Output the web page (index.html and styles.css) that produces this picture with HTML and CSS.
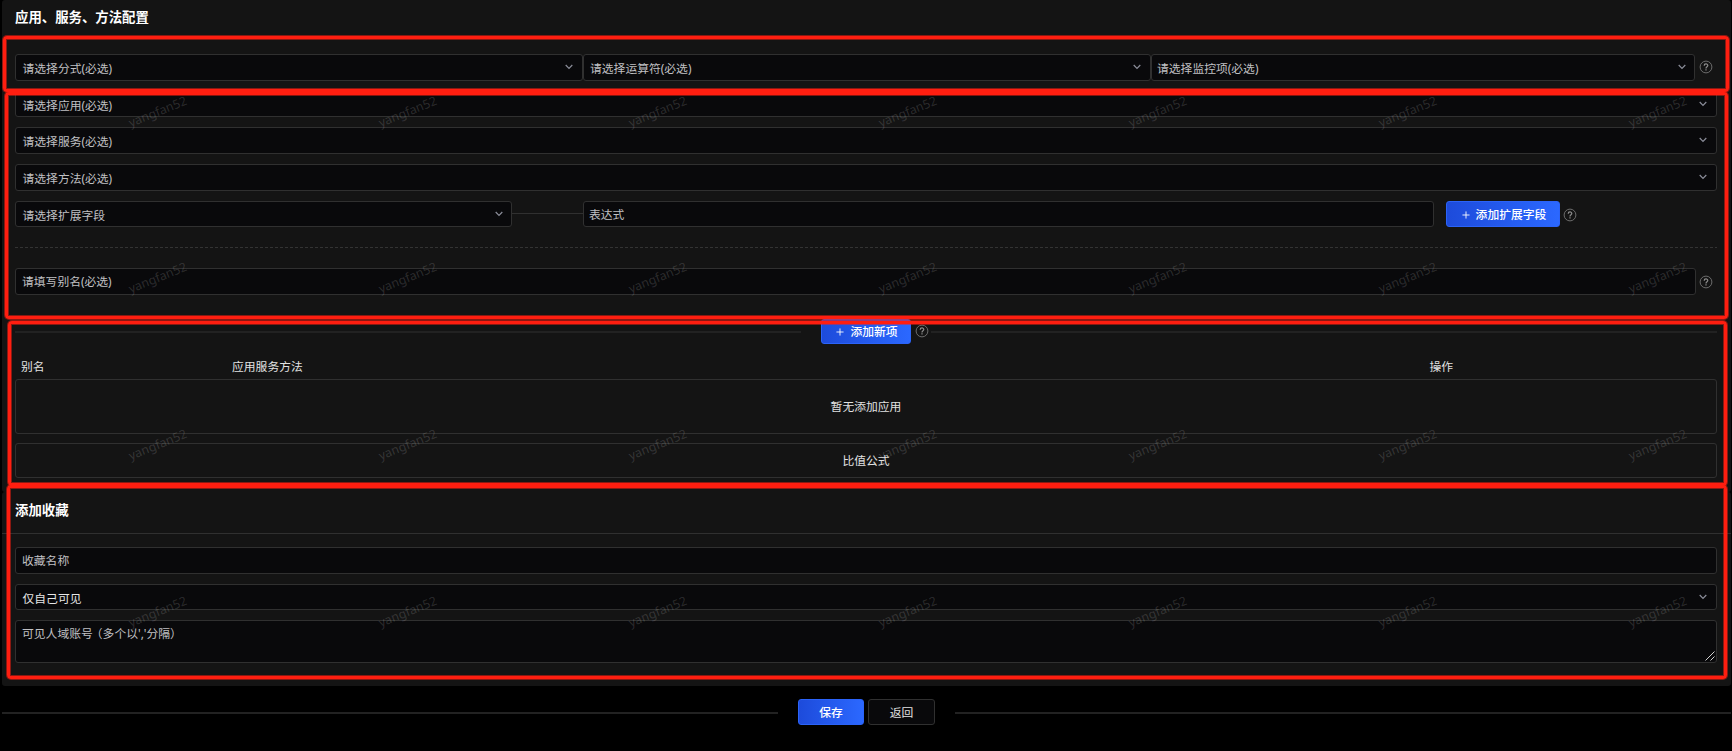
FILE: index.html
```html
<!DOCTYPE html>
<html lang="zh-CN">
<head>
<meta charset="utf-8">
<title>应用、服务、方法配置</title>
<link rel="stylesheet" href="styles.css">
</head>
<body>
<svg class="defs" width="0" height="0">
  <symbol id="chevron" viewBox="0 0 8 6"><path d="M.7 1 4 4.4 7.3 1" fill="none" stroke="currentColor" stroke-width="1.2"/></symbol>
  <symbol id="help" viewBox="0 0 14 14"><circle cx="7" cy="7" r="5.9" fill="none" stroke="#6c6c6c" stroke-width="1"/><path d="M5.2 5.7C5.2 3.4 8.8 3.4 8.8 5.6 8.8 6.8 7 6.8 7 8.4M7 9.3V10.5" fill="none" stroke="#909090" stroke-width="1.2"/></symbol>
  <symbol id="plus" viewBox="0 0 9 9"><path d="M4.5.5v8M.5 4.5h8" stroke="currentColor" stroke-width="1"/></symbol>
</svg>
<main class="page">
  <section class="panel config">
    <h2 class="title">应用、服务、方法配置</h2>
    <div class="formula">
      <div class="field select f1"><span>请选择分式(必选)</span><svg class="chev"><use href="#chevron"/></svg></div>
      <div class="field select f2"><span>请选择运算符(必选)</span><svg class="chev"><use href="#chevron"/></svg></div>
      <div class="field select f3"><span>请选择监控项(必选)</span><svg class="chev"><use href="#chevron"/></svg></div>
      <svg class="help"><use href="#help"/></svg>
    </div>
    <div class="stack">
      <div class="field select app"><span>请选择应用(必选)</span><svg class="chev"><use href="#chevron"/></svg></div>
      <div class="field select"><span>请选择服务(必选)</span><svg class="chev"><use href="#chevron"/></svg></div>
      <div class="field select"><span>请选择方法(必选)</span><svg class="chev"><use href="#chevron"/></svg></div>
    </div>
    <div class="extend">
      <div class="field select short ext"><span>请选择扩展字段</span><svg class="chev"><use href="#chevron"/></svg></div>
      <i class="joint"></i>
      <div class="field short expr"><span>表达式</span></div>
      <div class="btn primary add-ext"><svg class="plus"><use href="#plus"/></svg><span>添加扩展字段</span></div>
      <svg class="help"><use href="#help"/></svg>
    </div>
    <div class="dashed"></div>
    <div class="alias">
      <div class="field grow"><span>请填写别名(必选)</span></div>
      <svg class="help"><use href="#help"/></svg>
    </div>
    <div class="additem">
      <i class="rule left"></i>
      <div class="btn primary add-new"><svg class="plus"><use href="#plus"/></svg><span>添加新项</span></div>
      <svg class="help"><use href="#help"/></svg>
      <i class="rule right"></i>
    </div>
    <div class="thead"><span class="c1">别名</span><span class="c2">应用服务方法</span><span>操作</span></div>
    <div class="box empty">暂无添加应用</div>
    <div class="box ratio">比值公式</div>
  </section>
  <section class="panel favorite">
    <h2 class="title">添加收藏</h2>
    <div class="body">
      <div class="field"><span>收藏名称</span></div>
      <div class="field select short value"><span>仅自己可见</span><svg class="chev"><use href="#chevron"/></svg></div>
      <div class="field area"><span>可见人域账号<b class="fw">（</b>多个以','分隔<b class="fw end">）</b></span>
        <svg class="grip" viewBox="0 0 10 10"><path d="M.5 9.5l9-9M5.500 9.500l4-4" stroke="#d0d0d0" stroke-width="1"/></svg>
      </div>
    </div>
  </section>
  <footer class="footer">
    <i class="rule fl"></i>
    <div class="btn primary save">保存</div>
    <div class="btn back">返回</div>
    <i class="rule fr"></i>
  </footer>
</main>
<div class="watermarks">
  <span>yangfan52</span><span>yangfan52</span><span>yangfan52</span><span>yangfan52</span><span>yangfan52</span><span>yangfan52</span><span>yangfan52</span>
  <span>yangfan52</span><span>yangfan52</span><span>yangfan52</span><span>yangfan52</span><span>yangfan52</span><span>yangfan52</span><span>yangfan52</span>
  <span>yangfan52</span><span>yangfan52</span><span>yangfan52</span><span>yangfan52</span><span>yangfan52</span><span>yangfan52</span><span>yangfan52</span>
  <span>yangfan52</span><span>yangfan52</span><span>yangfan52</span><span>yangfan52</span><span>yangfan52</span><span>yangfan52</span><span>yangfan52</span>
</div>
<div class="mark m1"></div>
<div class="mark m2"></div>
<div class="mark m3"></div>
<div class="mark m4"></div>
</body>
</html>
```
FILE: styles.css
```css
* { box-sizing: border-box; }
body {
  margin: 0;
  width: 1732px;
  height: 751px;
  overflow: hidden;
  position: relative;
  background: #000;
  color: #e2e2e2;
  font: 11.8px/16px "Noto Sans", "Noto Sans CJK SC", sans-serif;
}
.defs { position: absolute; }
.page { padding: 0 1.5px 0 2px; }
.panel { background: #141414; border-radius: 3px; }
.config { height: 492px; padding: 0 13.5px 0 13px; }
.title { margin: 0; color: #fff; font-size: 13.4px; font-weight: 700; line-height: 20px; }
.config .title { padding-top: 7px; height: 54px; }

.field {
  display: flex;
  justify-content: space-between;
  height: 27px;
  padding: 4px 9px 0 6px;
  border: 1px solid #303030;
  border-radius: 3px;
  background: #09090b;
  color: #c0c0c3;
  white-space: nowrap;
}
.select { padding-top: 5px; padding-left: 6.5px; }
.app { padding-top: 6px; }
.short { height: 26px; }
.chev { width: 8px; height: 6px; margin-top: 4px; color: #8b8d99; flex: none; }
.help { width: 14px; height: 14px; flex: none; }
.value { color: #e6e6e6; }

.formula { display: flex; height: 36px; }
.f1 { width: 568px; }
.f2 { width: 567.5px; padding-left: 6px; }
.f3 { width: 544px; padding-left: 5.5px; padding-right: 8px; }
.formula .help { margin: 6px 0 0 4.5px; }
.stack { display: flex; flex-direction: column; gap: 10px; height: 111px; }
.extend { display: flex; height: 46px; }
.ext { width: 497px; padding-right: 8px; }
.joint { width: 71px; height: 1px; margin-top: 12px; background: #303030; }
.expr { width: 850.5px; padding-left: 5px; }
.add-ext { width: 114px; margin-left: 12.500px; }
.extend .help { margin: 6.5px 0 0 3px; }
.dashed { height: 1px; margin-bottom: 20px; background: repeating-linear-gradient(90deg, #333 0 3px, transparent 3px 5px); }
.alias { display: flex; height: 51px; }
.grow { width: 1681px; }
.alias .help { margin: 6.5px 0 0 3px; }

.btn {
  display: flex;
  align-items: center;
  justify-content: center;
  height: 26px;
  border: 1px solid #303030;
  border-radius: 3px;
  background: #09090b;
}
.primary {
  border-color: #2b63f8;
  background: linear-gradient(90deg, #1d4bdb, #2b68ff);
  color: #fff;
  font-weight: 500;
}
.plus { width: 8px; height: 8px; margin: 2px 6px 0 2px; }

.additem { display: flex; height: 42px; }
.rule { height: 1.5px; background: #222; }
.left { width: 786px; margin-top: 12px; }
.right { flex: 1; margin-top: 12px; margin-left: 1.500px; }
.add-new { width: 90px; margin-left: 20px; }
.additem .btn { height: 25px; padding-bottom: 1px; }
.additem .help { margin: 5px 0 0 4px; }
.thead { display: flex; height: 18px; padding-left: 6px; margin-top: -3px; align-items: flex-start; }
.c1 { width: 211px; }
.c2 { width: 1197.5px; }
.box { display: flex; align-items: center; justify-content: center; border: 1px solid #303030; border-radius: 3px; padding-bottom: 2px; }
.empty { height: 55px; margin-top: 3px; }
.ratio { height: 35px; margin-top: 9px; }

.favorite { height: 194px; }
.favorite .title { height: 42px; padding: 8px 13px 0; border-bottom: 1px solid #303030; }
.body { display: flex; flex-direction: column; gap: 10px; padding: 13px 13.5px 0 13px; }
.area { height: 43px; position: relative; }
.fw { font-weight: 400; margin-left: -2px; }
.fw.end { margin-left: 0; }
.grip { position: absolute; right: 1px; bottom: 1px; width: 10px; height: 10px; }

.footer { display: flex; padding-top: 13px; }
.footer .rule { margin-top: 13px; }
.fl { width: 776px; }
.fr { flex: 1; margin-left: 20px; }
.save { width: 66px; margin-left: 20px; }
.back { width: 67px; margin-left: 4px; }

.watermarks {
  position: absolute;
  left: 33px;
  top: 28.5px;
  display: grid;
  grid-template-columns: repeat(7, 250px);
  grid-auto-rows: 166.600px;
  place-items: center;
  color: rgba(255, 255, 255, .15);
  font-size: 12.4px;
}
.watermarks span { transform: rotate(-22deg); }

/* annotation frames drawn over the form */
.mark {
  position: absolute;
  border: 3px solid #ff1e10;
  border-radius: 4px;
  box-shadow: 0 0 0 1px rgba(255, 30, 16, .5), inset 0 0 0 1px rgba(255, 30, 16, .5);
}
.m1 { left: 3px; top: 36px; width: 1726px; height: 56px; }
.m2 { left: 5px; top: 92px; width: 1723px; height: 227px; }
.m3 { left: 8px; top: 321px; width: 1719px; height: 165px; }
.m4 { left: 7px; top: 485px; width: 1720px; height: 194px; }
```
